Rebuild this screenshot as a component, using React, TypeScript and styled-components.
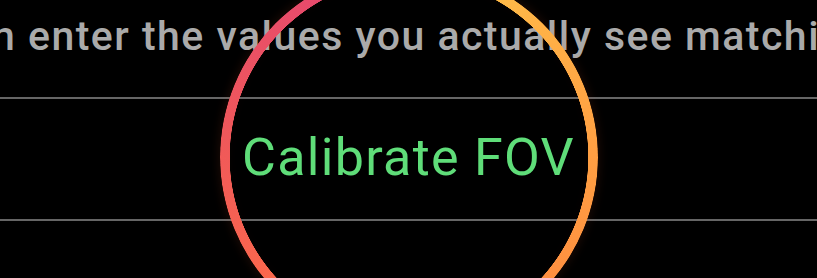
import React from "react";
import styled, { createGlobalStyle } from "styled-components";

const GlobalStyle = createGlobalStyle`
  html, body {
    margin: 0;
    padding: 0;
    background: #000;
  }
  body {
    font-family: Roboto, "Noto Sans", "Liberation Sans", sans-serif;
  }
`;

const Page = styled.div`
  position: relative;
  width: 817px;
  height: 278px;
  overflow: hidden;
  background: #000;
  display: flex;
  flex-direction: column;
`;

const HintRow = styled.div`
  height: 97px;
  display: flex;
  align-items: flex-start;
  overflow: hidden;
  box-sizing: border-box;
  padding-top: 16px;
`;

const HintText = styled.p`
  margin: 0 0 0 -8px;
  white-space: nowrap;
  font-size: 41px;
  line-height: 41px;
  font-weight: 500;
  letter-spacing: 1.48px;
  color: #aaaaaa;
`;

const Divider = styled.div`
  height: 2px;
  flex: none;
  background: #666;
`;

const ActionRow = styled.div`
  height: 120px;
  display: flex;
  align-items: center;
  justify-content: center;
`;

const ActionLabel = styled.span`
  font-size: 52px;
  line-height: 52px;
  font-weight: 400;
  letter-spacing: 1.3px;
  color: #5fdd79;
  margin-top: -2px;
`;

const Filler = styled.div`
  flex: 1;
`;

const Ring = styled.div`
  position: absolute;
  left: 220px;
  top: -32px;
  width: 378px;
  height: 378px;
  border-radius: 50%;
  box-shadow: 0 0 10px 2px rgba(255, 95, 50, 0.1),
    inset 0 0 14px 4px rgba(255, 95, 50, 0.08);
  pointer-events: none;
`;

const RingStroke = styled.div`
  width: 100%;
  height: 100%;
  border-radius: 50%;
  background: conic-gradient(
    from 0deg,
    #ffc94b 0deg,
    #ffaa45 60deg,
    #ff9040 130deg,
    #ff6e48 210deg,
    #f15a58 270deg,
    #e74a6c 330deg,
    #ec5a60 360deg
  );
  -webkit-mask: radial-gradient(
    farthest-side,
    transparent calc(100% - 10px),
    #000 calc(100% - 9.5px)
  );
  mask: radial-gradient(
    farthest-side,
    transparent calc(100% - 10px),
    #000 calc(100% - 9.5px)
  );
`;

export default function App() {
  return (
    <>
      <GlobalStyle />
      <Page>
        <HintRow>
          <HintText>n enter the values you actually see matching</HintText>
        </HintRow>
        <Divider />
        <ActionRow>
          <ActionLabel>Calibrate FOV</ActionLabel>
        </ActionRow>
        <Divider />
        <Filler />
        <Ring>
          <RingStroke />
        </Ring>
      </Page>
    </>
  );
}
